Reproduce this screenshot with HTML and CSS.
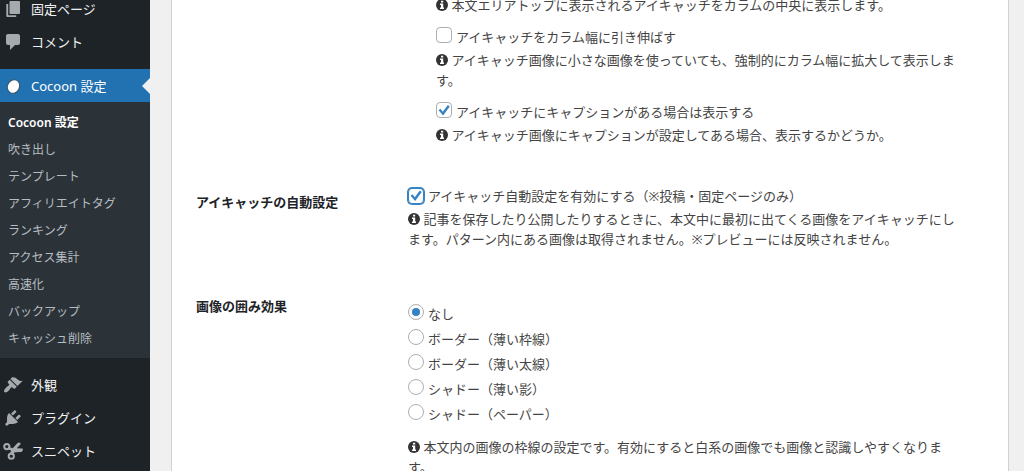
FILE: index.html
```html
<!DOCTYPE html>
<html lang="ja">
<head>
<meta charset="utf-8">
<meta name="viewport" content="width=device-width, initial-scale=1">
<title>Cocoon 設定</title>
<link rel="stylesheet" href="styles.css">
</head>
<body>
<svg class="sprite" aria-hidden="true">
  <symbol id="info" viewBox="0 0 12 12"><circle cx="6" cy="6" r="6"/><path class="knockout" d="M5 1.8h2.2v1.8H5zM4 4.6h3.2v4H8V10H4V8.600h1V6H4z"/></symbol>
</svg>
<div class="shell">
  <nav class="sidebar">
    <ul class="menu">
      <li><a class="menu-link" href="#"><svg class="icon" viewBox="0 0 20 20"><path d="M7.500 2h8.500q1 0 1 1v11q0 1-1 1H7.500q-1 0-1-1V3q0-1 1-1zM5.200 5v11.200h8V18H4.300q-1 0-1-1V5z"/></svg>固定ページ</a></li>
      <li><a class="menu-link" href="#"><svg class="icon" viewBox="0 0 20 20"><path d="M5 2h10c1.100 0 2 .9 2 2v7c0 1.100-.9 2-2 2h-3l-5 5v-5H5c-1.100 0-2-.9-2-2V4c0-1.100.9-2 2-2z"/></svg>コメント</a></li>
      <li class="current">
        <a class="menu-link" href="#"><svg class="icon" viewBox="0 0 20 20"><ellipse class="cocoon" cx="10.500" cy="10.500" rx="6" ry="7" transform="rotate(25 10.500 10.500)"/></svg>Cocoon 設定</a>
        <ul class="submenu">
          <li><a class="selected" href="#">Cocoon 設定</a></li>
          <li><a href="#">吹き出し</a></li>
          <li><a href="#">テンプレート</a></li>
          <li><a href="#">アフィリエイトタグ</a></li>
          <li><a href="#">ランキング</a></li>
          <li><a href="#">アクセス集計</a></li>
          <li><a href="#">高速化</a></li>
          <li><a href="#">バックアップ</a></li>
          <li><a href="#">キャッシュ削除</a></li>
        </ul>
      </li>
      <li><a class="menu-link" href="#"><svg class="icon" viewBox="0 0 20 20"><path d="M14.480 11.060L7.410 3.990l1.500-1.500c.5-.56 2.300-.47 3.510.32 1.210.8 1.430 1.280 2.910 2.100 1.180.64 2.450 1.260 4.450.85zm-.71.71L6.700 4.700 4.930 6.470c-.39.39-.39 1.020 0 1.410l1.060 1.060c.39.39.39 1.030 0 1.420-.6.6-1.430 1.110-2.210 1.690-.35.26-.7.53-1.010.84C1.430 14.230.4 16.080 1.400 17.070c.99 1 2.840-.03 4.180-1.360.31-.31.58-.66.85-1.020.57-.78 1.080-1.610 1.690-2.210.39-.39 1.020-.39 1.410 0l1.060 1.060c.39.39 1.020.39 1.410 0z"/></svg>外観</a></li>
      <li><a class="menu-link" href="#"><svg class="icon" viewBox="0 0 20 20"><path d="M13.110 4.360L9.870 7.600 8 5.730l3.240-3.240c.35-.34 1.050-.2 1.560.32.52.51.66 1.210.31 1.550zm-8 1.770l.91-1.120 9.010 9.010-1.190.84c-.71.71-2.630 1.160-3.820 1.160H6.140L4.900 17.260c-.59.59-1.540.59-2.120 0-.59-.58-.59-1.530 0-2.120l1.240-1.240v-3.880c0-1.130.4-3.190 1.090-3.890zm7.260 3.970l3.240-3.240c.34-.35 1.040-.21 1.550.31.52.51.66 1.210.31 1.550l-3.240 3.250z"/></svg>プラグイン</a></li>
      <li><a class="menu-link" href="#"><svg class="icon" viewBox="0 0 20 20"><g class="rings"><circle cx="3.800" cy="5.600" r="2.600"/><circle cx="8.300" cy="15.200" r="2.600"/></g><path d="M5.500 5.800l4.200 1.400L14.500 2q2.300-1.400 3.300.9L13.800 7.200l5.700.2q1.200 2.200-1.200 3.600l-6.500.2-2.300 3-2.500-1 1-3.800-3.600-1.400z"/></svg>スニペット</a></li>
    </ul>
  </nav>
  <main class="page">
    <form class="panel">
      <section class="setting">
        <h2 class="title"></h2>
        <div class="fields nested">
          <p class="tip"><svg class="info"><use href="#info"/></svg> 本文エリアトップに表示されるアイキャッチをカラムの中央に表示します。</p>
          <label class="choice"><input type="checkbox"> アイキャッチをカラム幅に引き伸ばす</label>
          <p class="tip"><svg class="info"><use href="#info"/></svg> アイキャッチ画像に小さな画像を使っていても、強制的にカラム幅に拡大して表示します。</p>
          <label class="choice"><input type="checkbox" checked> アイキャッチにキャプションがある場合は表示する</label>
          <p class="tip"><svg class="info"><use href="#info"/></svg> アイキャッチ画像にキャプションが設定してある場合、表示するかどうか。</p>
        </div>
      </section>
      <section class="setting">
        <h2 class="title">アイキャッチの自動設定</h2>
        <div class="fields">
          <label class="choice"><input class="focused" type="checkbox" checked> アイキャッチ自動設定を有効にする（※投稿・固定ページのみ）</label>
          <p class="tip"><svg class="info"><use href="#info"/></svg> 記事を保存したり公開したりするときに、本文中に最初に出てくる画像をアイキャッチにします。パターン内にある画像は取得されません。※プレビューには反映されません。</p>
        </div>
      </section>
      <section class="setting">
        <h2 class="title">画像の囲み効果</h2>
        <div class="fields">
          <div class="options">
            <label class="choice"><input type="radio" name="frame" checked> なし</label>
            <label class="choice"><input type="radio" name="frame"> ボーダー（薄い枠線）</label>
            <label class="choice"><input type="radio" name="frame"> ボーダー（薄い太線）</label>
            <label class="choice"><input type="radio" name="frame"> シャドー（薄い影）</label>
            <label class="choice"><input type="radio" name="frame"> シャドー（ペーパー）</label>
          </div>
          <p class="tip"><svg class="info"><use href="#info"/></svg> 本文内の画像の枠線の設定です。有効にすると白系の画像でも画像と認識しやすくなります。</p>
        </div>
      </section>
    </form>
  </main>
</div>
</body>
</html>
```

FILE: styles.css
```css
* { box-sizing: border-box; }
body {
  margin: 0;
  background: #f0f0f1;
  color: #444;
  font: 13px/20px "Noto Sans", "Noto Sans CJK JP", sans-serif;
}
ul, p, h2 { margin: 0; padding: 0; list-style: none; }
a { color: inherit; text-decoration: none; }
.sprite { display: none; }
.knockout { fill: #fff; }

.shell { display: flex; height: 100vh; overflow: hidden; }

.sidebar { flex: 0 0 150px; background: #1d2327; color: #f0f0f1; }
.menu { margin-top: -8px; }
.menu-link {
  display: flex;
  align-items: center;
  gap: 8px;
  height: 33px;
  padding-left: 3px;
}
.icon { width: 20px; height: 20px; fill: #a7aaad; }
.cocoon { fill: #fff; stroke: #31566f; }
.rings { fill: none; stroke: #a7aaad; stroke-width: 2; }
.current { margin: 11px 0 10px; }
.current > .menu-link { position: relative; background: #2271b1; color: #fff; }
.current > .menu-link::after {
  content: "";
  position: absolute;
  right: 0;
  top: 9px;
  border: 8px solid transparent;
  border-left: 0;
  border-right-color: #f0f0f1;
}
.submenu {
  padding: 7px 8px 6px;
  background: #2c3338;
  color: #b5bcc2;
  font-size: 12px;
  line-height: 27px;
}
.submenu a { display: block; }
.submenu .selected { color: #fff; font-weight: 600; }

.page { flex: 1; min-width: 0; padding: 0 15px 0 21px; }
.panel {
  min-height: 100%;
  padding: 0 42px 0 24px;
  background: #fff;
  border: 1px solid #d0d1d3;
  border-width: 0 1px;
  margin-top: -5px;
}
.setting { display: flex; margin-bottom: 29px; }
.title {
  flex: 0 0 212px;
  padding-top: 8px;
  color: #1d2327;
  font-size: 13px;
  line-height: 20px;
  font-weight: 600;
}
.fields { flex: 1; min-width: 0; }
.nested { padding-left: 28px; }
.choice {
  display: flex;
  align-items: center;
  gap: 4px;
  height: 23px;
  margin-bottom: 2px;
}
.tip { margin-bottom: 10px; }
.options { padding: 14px 0 10px; }
.info { width: 12px; height: 12px; vertical-align: -1px; fill: #333; }

input {
  flex: none;
  display: grid;
  place-items: center;
  appearance: none;
  width: 16px;
  height: 16px;
  margin: 0 0 3px;
  border: 1px solid #acaeb1;
  border-radius: 4px;
  background: #fff;
}
input[type="radio"] { border-radius: 50%; }
input[type="radio"]:checked::before {
  content: "";
  width: 8px;
  height: 8px;
  border-radius: 50%;
  background: #3582c4;
}
input[type="checkbox"]:checked::before {
  content: "";
  width: 12px;
  height: 12px;
  background: #3582c4;
  clip-path: polygon(5% 52%, 20% 40%, 40% 65%, 82% 8%, 98% 20%, 43% 95%);
}
.focused { margin-bottom: 0; border-color: #3582c4; box-shadow: 0 0 0 1px #3582c4; }
```
